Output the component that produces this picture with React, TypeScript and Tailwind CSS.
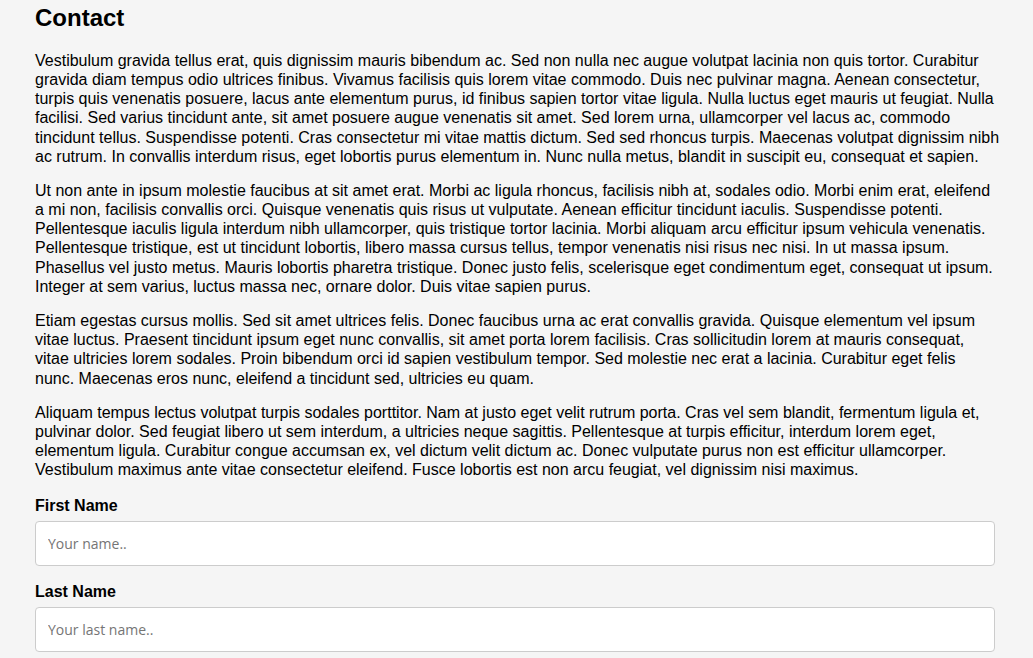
export default function App() {
  const paras = [
    "Vestibulum gravida tellus erat, quis dignissim mauris bibendum ac. Sed non nulla nec augue volutpat lacinia non quis tortor. Curabitur gravida diam tempus odio ultrices finibus. Vivamus facilisis quis lorem vitae commodo. Duis nec pulvinar magna. Aenean consectetur, turpis quis venenatis posuere, lacus ante elementum purus, id finibus sapien tortor vitae ligula. Nulla luctus eget mauris ut feugiat. Nulla facilisi. Sed varius tincidunt ante, sit amet posuere augue venenatis sit amet. Sed lorem urna, ullamcorper vel lacus ac, commodo tincidunt tellus. Suspendisse potenti. Cras consectetur mi vitae mattis dictum. Sed sed rhoncus turpis. Maecenas volutpat dignissim nibh ac rutrum. In convallis interdum risus, eget lobortis purus elementum in. Nunc nulla metus, blandit in suscipit eu, consequat et sapien.",
    "Ut non ante in ipsum molestie faucibus at sit amet erat. Morbi ac ligula rhoncus, facilisis nibh at, sodales odio. Morbi enim erat, eleifend a mi non, facilisis convallis orci. Quisque venenatis quis risus ut vulputate. Aenean efficitur tincidunt iaculis. Suspendisse potenti. Pellentesque iaculis ligula interdum nibh ullamcorper, quis tristique tortor lacinia. Morbi aliquam arcu efficitur ipsum vehicula venenatis. Pellentesque tristique, est ut tincidunt lobortis, libero massa cursus tellus, tempor venenatis nisi risus nec nisi. In ut massa ipsum. Phasellus vel justo metus. Mauris lobortis pharetra tristique. Donec justo felis, scelerisque eget condimentum eget, consequat ut ipsum. Integer at sem varius, luctus massa nec, ornare dolor. Duis vitae sapien purus.",
    "Etiam egestas cursus mollis. Sed sit amet ultrices felis. Donec faucibus urna ac erat convallis gravida. Quisque elementum vel ipsum vitae luctus. Praesent tincidunt ipsum eget nunc convallis, sit amet porta lorem facilisis. Cras sollicitudin lorem at mauris consequat, vitae ultricies lorem sodales. Proin bibendum orci id sapien vestibulum tempor. Sed molestie nec erat a lacinia. Curabitur eget felis nunc. Maecenas eros nunc, eleifend a tincidunt sed, ultricies eu quam.",
    "Aliquam tempus lectus volutpat turpis sodales porttitor. Nam at justo eget velit rutrum porta. Cras vel sem blandit, fermentum ligula et, pulvinar dolor. Sed feugiat libero ut sem interdum, a ultricies neque sagittis. Pellentesque at turpis efficitur, interdum lorem eget, elementum ligula. Curabitur congue accumsan ex, vel dictum velit dictum ac. Donec vulputate purus non est efficitur ullamcorper. Vestibulum maximus ante vitae consectetur eleifend. Fusce lobortis est non arcu feugiat, vel dignissim nisi maximus.",
  ];
  return (
    <div className="min-h-[658px] bg-[#f5f5f5] text-black font-['Liberation_Sans',Arial,sans-serif] pl-[35px] pr-[38px] pt-[4px] pb-4">
      <h1 className="text-[24px] font-bold leading-[1.2] mb-[18px]">Contact</h1>
      <div className="flex flex-col gap-[15px] text-[16px] leading-[1.2]">
        {paras.map((p, i) => (
          <p key={i} className={i === 0 ? "mr-[-5px]" : ""}>
            {p}
          </p>
        ))}
      </div>
      <div className="mt-[16px] flex flex-col">
        <label className="font-bold text-[16px] leading-[1.2] mb-[6px]">First Name</label>
        <input
          type="text"
          placeholder="Your name.."
          className="h-[45px] w-full bg-white border border-[#cccccc] rounded-[4px] px-[12px] text-[14px] font-['Open_Sans',sans-serif] placeholder:text-[#757575] outline-none"
        />
        <label className="font-bold text-[16px] leading-[1.2] mt-[16px] mb-[6px]">Last Name</label>
        <input
          type="text"
          placeholder="Your last name.."
          className="h-[45px] w-full bg-white border border-[#cccccc] rounded-[4px] px-[12px] text-[14px] font-['Open_Sans',sans-serif] placeholder:text-[#757575] outline-none"
        />
      </div>
    </div>
  );
}
